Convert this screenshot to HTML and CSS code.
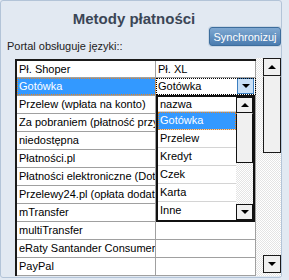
FILE: index.html
```html
<!DOCTYPE html>
<html lang="pl">
<head>
    <meta charset="UTF-8">
    <title>Metody płatności</title>
    <link rel="stylesheet" href="styles.css">
</head>
<body>

<div class="frame">
    <h1 class="title">Metody płatności</h1>

    <div class="bar">
        <span class="label">Portal obsługuje języki::</span>
        <button class="sync">Synchronizuj</button>
    </div>

    <div class="grid-wrap">
        <div class="grid">
            <div class="row head">
                <div class="cell c1">Pł. Shoper</div>
                <div class="cell c2">Pł. XL</div>
            </div>
            <div class="row">
                <div class="cell c1 selected">Gotówka</div>
                <div class="cell c2 editing">
                    <span>Gotówka</span>
                    <span class="drop-btn"><i class="arrow down"></i></span>
                </div>
            </div>
            <div class="row"><div class="cell c1">Przelew (wpłata na konto)</div><div class="cell c2"></div></div>
            <div class="row"><div class="cell c1">Za pobraniem (płatność przy odbiorze)</div><div class="cell c2"></div></div>
            <div class="row"><div class="cell c1">niedostępna</div><div class="cell c2"></div></div>
            <div class="row"><div class="cell c1">Płatności.pl</div><div class="cell c2"></div></div>
            <div class="row"><div class="cell c1">Płatności elektroniczne (DotPay)</div><div class="cell c2"></div></div>
            <div class="row"><div class="cell c1">Przelewy24.pl (opłata dodatkowa)</div><div class="cell c2"></div></div>
            <div class="row"><div class="cell c1">mTransfer</div><div class="cell c2"></div></div>
            <div class="row"><div class="cell c1">multiTransfer</div><div class="cell c2"></div></div>
            <div class="row"><div class="cell c1">eRaty Santander Consumer Bank</div><div class="cell c2"></div></div>
            <div class="row"><div class="cell c1">PayPal</div><div class="cell c2"></div></div>

            <!-- open combo list of the edited cell -->
            <div class="dropdown">
                <div class="items">
                    <div class="item head">nazwa</div>
                    <div class="item sel">Gotówka</div>
                    <div class="item">Przelew</div>
                    <div class="item">Kredyt</div>
                    <div class="item">Czek</div>
                    <div class="item">Karta</div>
                    <div class="item">Inne</div>
                </div>
                <div class="lscroll">
                    <div class="lbtn"><i class="arrow up"></i></div>
                    <div class="lthumb"></div>
                    <div class="track"></div>
                    <div class="lbtn"><i class="arrow down"></i></div>
                </div>
            </div>
        </div>

        <div class="vscroll">
            <div class="sbtn"><i class="arrow up"></i></div>
            <div class="thumb"></div>
            <div class="track"></div>
            <div class="sbtn last"><i class="arrow down"></i></div>
        </div>
    </div>
</div>

</body>
</html>
```

FILE: styles.css
```css
body {
    margin: 0;
    background: #e2e9f2;
    font-family: "Liberation Sans", Arial, sans-serif;
    font-size: 11px;
    color: #000;
}

.frame {
    box-sizing: border-box;
    width: 282px;
    height: 278px;
    border: 1px solid #b3c4d8;
    border-radius: 3px;
    background: #e2e9f2;
}

.title {
    margin: 0;
    padding: 9px 14px 0 0;
    font-size: 15px;
    line-height: 17px;
    font-weight: bold;
    text-align: center;
    color: #3b4656;
}

.bar {
    display: flex;
    justify-content: space-between;
    align-items: flex-start;
    height: 26px;
    padding-left: 6px;
}

.label {
    margin-top: 13px;
    line-height: 13px;
    color: #222;
}

.sync {
    width: 72px;
    height: 19px;
    padding: 0;
    border: 1px solid #3d6d9c;
    border-radius: 3px;
    background: linear-gradient(#7fa8d1, #4a7cb0);
    box-shadow: 0 0 0 1px #c9d7e6;
    color: #fff;
    font-family: "Liberation Sans", Arial, sans-serif;
    font-size: 11px;
    cursor: pointer;
}

.grid-wrap {
    display: flex;
    align-items: flex-start;
    margin: 5px 0 0 14px;
}

.grid {
    position: relative;
    width: 239px;
    margin-top: 1px;
    border-top: 2px solid #1a1a1a;
    border-left: 2px solid #1a1a1a;
    background: #fff;
}

.row {
    display: flex;
    box-sizing: border-box;
    height: 18px;
    border-bottom: 1px solid #a0a0a0;
}

.row.head {
    height: 17px;
}

.cell {
    box-sizing: border-box;
    padding-left: 2px;
    line-height: 17px;
    white-space: nowrap;
    overflow: hidden;
    border-right: 1px solid #a0a0a0;
}

.head .cell {
    line-height: 16px;
}

.c1 {
    width: 139px;
}

.c2 {
    width: 100px;
}

.selected {
    background: #3399ff;
    color: #fff;
    outline: 1px dotted #e8841f;
    outline-offset: -1px;
}

.editing {
    display: flex;
    justify-content: space-between;
    outline: 1px dotted #000;
    outline-offset: -1px;
}

.drop-btn {
    box-sizing: border-box;
    width: 17px;
    height: 16px;
    margin-right: 1px;
    display: flex;
    align-items: center;
    justify-content: center;
    background: #c9e0f7;
    border: 1px solid #3c7fc0;
}

.arrow {
    width: 0;
    height: 0;
    border-left: 4px solid transparent;
    border-right: 4px solid transparent;
}

.arrow.down {
    border-top: 4px solid #000;
}

.arrow.up {
    border-bottom: 4px solid #000;
}

.track {
    flex: 1;
}

/* outer scrollbar */
.vscroll {
    width: 25px;
    height: 218px;
    display: flex;
    flex-direction: column;
    align-items: flex-end;
    background: repeating-conic-gradient(#fff 0 25%, #e4e4e4 0 50%) 0 0 / 2px 2px;
}

.sbtn {
    box-sizing: border-box;
    flex: none;
    width: 18px;
    height: 18px;
    display: flex;
    align-items: center;
    justify-content: center;
    border: 1px solid #1a1a1a;
    background: #f0f0f0;
}

.sbtn.last {
    margin-bottom: 3px;
}

.thumb {
    box-sizing: border-box;
    flex: none;
    width: 18px;
    height: 77px;
    border: 1px solid #1a1a1a;
    border-top-color: #f0f0f0;
    background: #f0f0f0;
}

/* combo list */
.dropdown {
    position: absolute;
    left: 139px;
    top: 34px;
    box-sizing: border-box;
    width: 99px;
    height: 127px;
    display: flex;
    border: 2px solid #111;
    background: #fff;
}

.items {
    flex: 1;
}

.item {
    box-sizing: border-box;
    height: 18px;
    padding-left: 2px;
    line-height: 17px;
    border-bottom: 1px solid #d4d4d4;
}

.item.head {
    height: 15px;
    line-height: 14px;
}

.item:last-child {
    border-bottom: none;
}

.item.sel {
    background: #3399ff;
    color: #fff;
    outline: 1px dotted #e8841f;
    outline-offset: -1px;
}

.lscroll {
    width: 17px;
    display: flex;
    flex-direction: column;
    background: repeating-conic-gradient(#fff 0 25%, #e4e4e4 0 50%) 0 0 / 2px 2px;
}

.lbtn {
    box-sizing: border-box;
    flex: none;
    height: 16px;
    display: flex;
    align-items: center;
    justify-content: center;
    border: 1px solid #111;
    background: #f0f0f0;
}

.lthumb {
    box-sizing: border-box;
    flex: none;
    height: 50px;
    border: 1px solid #111;
    border-top-color: #f0f0f0;
    background: #f0f0f0;
}
```
